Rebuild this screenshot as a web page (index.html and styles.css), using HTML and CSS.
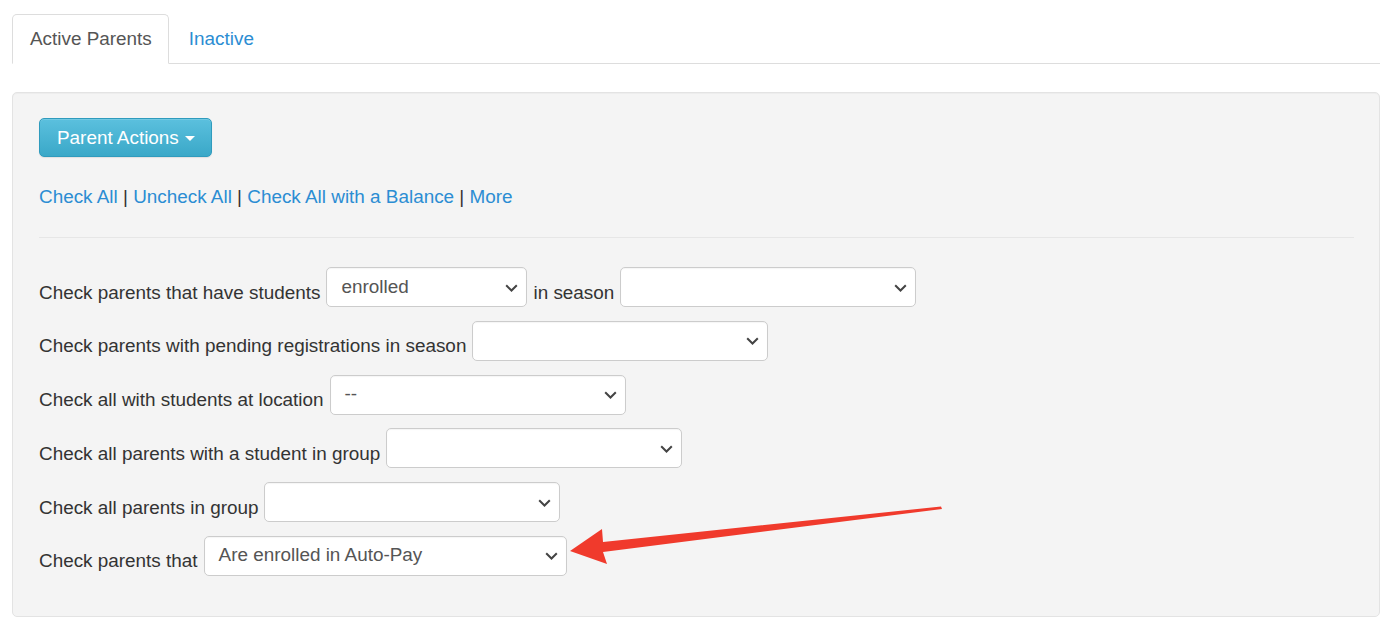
FILE: index.html
```html
<!DOCTYPE html>
<html>
<head>
<meta charset="utf-8">
<link rel="stylesheet" href="styles.css">
</head>
<body>
<div class="page">
  <ul class="tabs">
    <li class="tab active">Active Parents</li>
    <li class="tab"><a href="#">Inactive</a></li>
  </ul>
  <div class="well">
    <button class="btn-info">Parent Actions <span class="caret"></span></button>
    <div class="links">
      <a href="#">Check All</a> | <a href="#">Uncheck All</a> | <a href="#">Check All with a Balance</a> | <a href="#">More</a>
    </div>
    <hr class="rule">
    <div class="rows">
      <div class="row">
        <span class="lbl">Check parents that have students</span>
        <div class="sel w201"><span>enrolled</span><svg class="chev" width="13" height="8" viewBox="0 0 13 8"><path d="M1.2 1.3 L6.5 6.5 L11.8 1.3" fill="none" stroke="#444" stroke-width="2"/></svg></div>
        <span class="lbl">in season</span>
        <div class="sel w296"><span></span><svg class="chev" width="13" height="8" viewBox="0 0 13 8"><path d="M1.2 1.3 L6.5 6.5 L11.8 1.3" fill="none" stroke="#444" stroke-width="2"/></svg></div>
      </div>
      <div class="row">
        <span class="lbl">Check parents with pending registrations in season</span>
        <div class="sel w296"><span></span><svg class="chev" width="13" height="8" viewBox="0 0 13 8"><path d="M1.2 1.3 L6.5 6.5 L11.8 1.3" fill="none" stroke="#444" stroke-width="2"/></svg></div>
      </div>
      <div class="row">
        <span class="lbl">Check all with students at location</span>
        <div class="sel w296"><span>--</span><svg class="chev" width="13" height="8" viewBox="0 0 13 8"><path d="M1.2 1.3 L6.5 6.5 L11.8 1.3" fill="none" stroke="#444" stroke-width="2"/></svg></div>
      </div>
      <div class="row">
        <span class="lbl">Check all parents with a student in group</span>
        <div class="sel w296"><span></span><svg class="chev" width="13" height="8" viewBox="0 0 13 8"><path d="M1.2 1.3 L6.5 6.5 L11.8 1.3" fill="none" stroke="#444" stroke-width="2"/></svg></div>
      </div>
      <div class="row">
        <span class="lbl">Check all parents in group</span>
        <div class="sel w296"><span></span><svg class="chev" width="13" height="8" viewBox="0 0 13 8"><path d="M1.2 1.3 L6.5 6.5 L11.8 1.3" fill="none" stroke="#444" stroke-width="2"/></svg></div>
      </div>
      <div class="row">
        <span class="lbl">Check parents that</span>
        <div class="sel w363"><span>Are enrolled in Auto-Pay</span><svg class="chev" width="13" height="8" viewBox="0 0 13 8"><path d="M1.2 1.3 L6.5 6.5 L11.8 1.3" fill="none" stroke="#444" stroke-width="2"/></svg></div>
      </div>
    </div>
  </div>
  <svg class="arrow" width="1398" height="628" viewBox="0 0 1398 628">
    <polygon points="941,506.5 942,509 603,552 607,564 570,551 602,529 603,542" fill="#f03a2c"/>
  </svg>
</div>
</body>
</html>
```

FILE: styles.css
```css
* { box-sizing: border-box; }
html, body { margin: 0; padding: 0; background: #fff; }
body {
  font-family: "Liberation Sans", Arial, sans-serif;
  font-size: 18.9px;
  color: #333;
}
a { color: #2b8dd3; text-decoration: none; }
.page {
  position: relative;
  padding: 14px 18px 0 12px;
}
.tabs {
  list-style: none;
  margin: 0;
  padding: 0;
  display: flex;
  height: 50px;
  border-bottom: 1px solid #ddd;
}
.tab {
  height: 50px;
  margin-bottom: -1px;
  display: flex;
  align-items: center;
  padding: 0 18px;
  border: 1px solid transparent;
  border-radius: 5px 5px 0 0;
}
.tab + .tab { margin-left: 1px; }
.tab.active {
  background: #fff;
  border-color: #ddd;
  border-bottom-color: #fff;
  color: #555;
  padding: 0 16px 0 17px;
}
.well {
  margin-top: 28px;
  background: #f4f4f4;
  border: 1px solid #e3e3e3;
  border-radius: 5px;
  padding: 25px 25px 40px 26px;
  box-shadow: inset 0 1px 1px rgba(0,0,0,0.03);
}
.btn-info {
  display: flex;
  align-items: center;
  width: 173px;
  height: 39px;
  padding: 0 0 0 17px;
  font-family: inherit;
  font-size: 18.9px;
  color: #fff;
  background: linear-gradient(to bottom, #5bc0de 0%, #3aa8c8 100%);
  border: 1px solid #2f9bbd;
  border-radius: 5px;
  box-shadow: inset 0 1px 0 rgba(255,255,255,0.15), 0 1px 1px rgba(0,0,0,0.08);
}
.caret {
  display: inline-block;
  width: 0;
  height: 0;
  margin-left: 6px;
  margin-top: 1px;
  border-top: 5px solid #fff;
  border-left: 5px solid transparent;
  border-right: 5px solid transparent;
}
.links {
  margin-top: 26px;
  line-height: 27px;
  height: 27px;
}
.rule {
  margin: 27px 0 0 0;
  border: 0;
  border-top: 1px solid #e6e6e6;
  height: 0;
}
.rows {
  margin-top: 29px;
  display: flex;
  flex-direction: column;
  gap: 13.8px;
}
.row {
  display: flex;
  align-items: center;
  gap: 6px;
  height: 40px;
}
.lbl {
  padding-top: 11px;
  white-space: nowrap;
}
.sel {
  height: 40px;
  background: #fff;
  border: 1px solid #ccc;
  border-radius: 5px;
  display: flex;
  align-items: center;
  justify-content: space-between;
  padding: 0 8px 0 14px;
  color: #555;
  box-shadow: inset 0 1px 1px rgba(0,0,0,0.04);
}
.sel span { padding-bottom: 1px; }
.chev { display: block; margin-top: 1px; }
.w201 { width: 201px; }
.w296 { width: 296px; }
.w363 { width: 363px; }
.arrow {
  position: absolute;
  left: 0;
  top: 0;
  pointer-events: none;
}
```
